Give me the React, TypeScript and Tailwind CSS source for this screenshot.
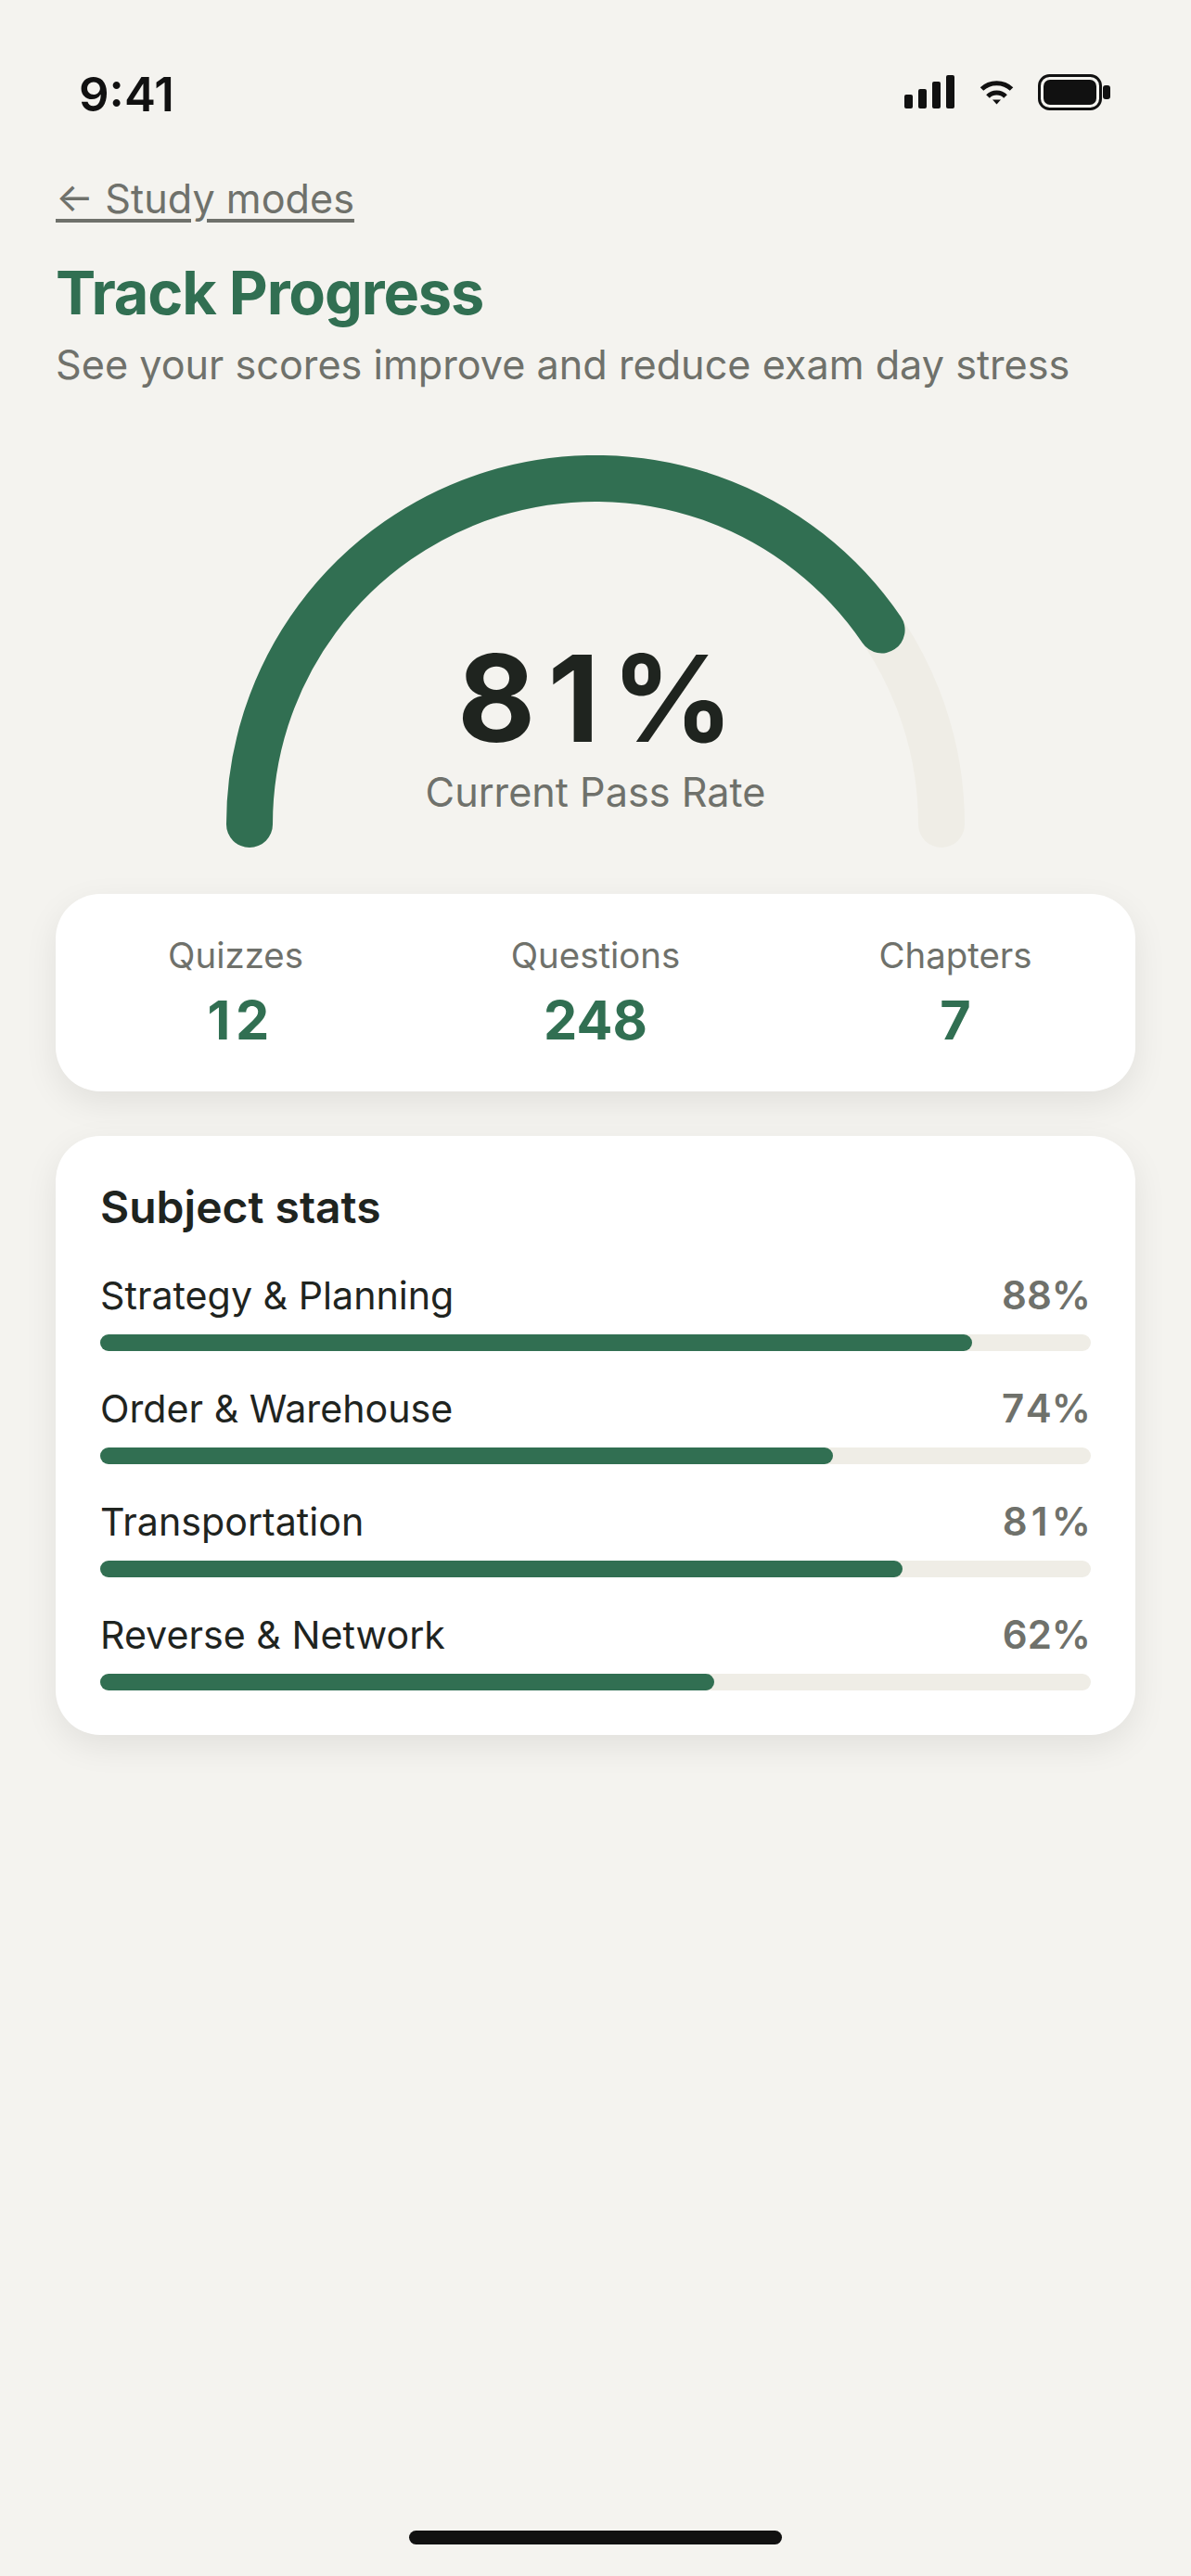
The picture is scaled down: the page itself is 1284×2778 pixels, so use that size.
const GREEN = "#316f52";

function StatusIcons() {
  return (
    <svg width="230" height="42" viewBox="0 0 230 42" fill="none" className="block -mt-[2px]">
      <rect x="8" y="22" width="9" height="15" rx="2" fill="#111" />
      <rect x="23" y="16" width="9" height="21" rx="2" fill="#111" />
      <rect x="38" y="8" width="9" height="29" rx="2" fill="#111" />
      <rect x="53" y="1" width="9" height="36" rx="2" fill="#111" />
      <path d="M91.5 16 C100 7.5 115 7.5 123.5 16" stroke="#111" strokeWidth="5" />
      <path d="M98 24 C103 18.5 112 18.5 117 24" stroke="#111" strokeWidth="5" />
      <path d="M103 27.5 L112 27.5 L107.5 32.5 Z" fill="#111" />
      <rect x="153.5" y="1.5" width="66" height="36" rx="11" stroke="#111" strokeWidth="3" />
      <rect x="158" y="6" width="57" height="27" rx="7" fill="#111" />
      <rect x="222" y="12" width="8" height="15" rx="3" fill="#111" />
    </svg>
  );
}

function Gauge() {
  return (
    <svg width="800" height="428" viewBox="0 0 800 428" fill="none" className="block">
      <path d="M27 398 A373 373 0 0 1 773 398" stroke="#efede6" strokeWidth="50" strokeLinecap="round" />
      <path d="M27 398 A373 373 0 0 1 708.6 188.4" stroke={GREEN} strokeWidth="50" strokeLinecap="round" />
    </svg>
  );
}

// Figures in the picture are evenly spaced, but keep the plain flagged "1".
function Num({ text }: { text: string }) {
  return (
    <>
      {text.split("").map((c, i) =>
        c === "1" ? (
          <span key={i} className="mx-[0.1em]">{c}</span>
        ) : c === "7" ? (
          <span key={i} className="mx-[0.04em]">{c}</span>
        ) : (
          <span key={i}>{c}</span>
        ),
      )}
    </>
  );
}

const stats = [
  { label: "Quizzes", value: "12" },
  { label: "Questions", value: "248" },
  { label: "Chapters", value: "7" },
];

const subjects = [
  { name: "Strategy & Planning", pct: 88 },
  { name: "Order & Warehouse", pct: 74 },
  { name: "Transportation", pct: 81 },
  { name: "Reverse & Network", pct: 62 },
];

export default function App() {
  return (
    <div className="relative flex min-h-[2778px] flex-col bg-[#f4f3ef] px-[60px] font-['Inter',sans-serif]">
      <div className="mt-[81px] flex h-[42px] items-center justify-between pl-[25px] pr-[27px]">
        <span className="text-[51px] leading-[42px] font-semibold text-[#111111] [font-variation-settings:'opsz'_17]">9:41</span>
        <StatusIcons />
      </div>
      <a className="mt-[61px] self-start text-[43.2px] leading-[60px] text-[#6f716b] underline decoration-[4px] underline-offset-[6px] [font-variation-settings:'opsz'_14]">← Study modes</a>
      <h1 className="mt-[36px] text-[64.8px] leading-[72px] font-bold tracking-[-1.15px] text-[#316f52] [font-variation-settings:'opsz'_21.6]">Track Progress</h1>
      <p className="mt-[11px] text-[43.2px] leading-[60px] text-[#6f716b] [font-variation-settings:'opsz'_14]">See your scores improve and reduce exam day stress</p>

      <div className="relative mt-[68px] flex justify-center">
        <Gauge />
        <div className="absolute left-0 right-0 top-[190px] flex flex-col items-center">
          <span className="text-[129.6px] leading-[144px] font-bold text-[#1f241f] [font-variation-settings:'opsz'_14]"><Num text="81%" /></span>
          <span className="mt-[1px] text-[43.2px] leading-[56px] text-[#6f716b] [font-variation-settings:'opsz'_14]">Current Pass Rate</span>
        </div>
      </div>

      <div className="mt-[45px] grid h-[213px] grid-cols-3 items-center rounded-[48px] bg-white shadow-[0_12px_36px_rgba(0,0,0,0.08)]">
        {stats.map((s) => (
          <div key={s.label} className="flex flex-col items-center">
            <span className="-mt-[2px] text-[38.4px] leading-[52px] text-[#6f716b] [font-variation-settings:'opsz'_14]">{s.label}</span>
            <span className="mt-[8px] text-[57.6px] leading-[72px] font-bold text-[#316f52] [font-variation-settings:'opsz'_14]"><Num text={s.value} /></span>
          </div>
        ))}
      </div>

      <div className="mt-[48px] rounded-[48px] bg-white px-[48px] pt-[45px] pb-[48px] shadow-[0_12px_36px_rgba(0,0,0,0.08)]">
        <h2 className="text-[48px] leading-[64px] font-semibold text-[#1f241f] [font-variation-settings:'opsz'_16]">Subject stats</h2>
        <div className="mt-[33px] flex flex-col gap-[32px]">
          {subjects.map((s) => (
            <div key={s.name} className="flex flex-col">
              <div className="flex h-[60px] items-center justify-between">
                <span className="text-[41.2px] leading-[56px] text-[#1f241f] [font-variation-settings:'opsz'_14]">{s.name}</span>
                <span className="text-[42px] leading-[56px] font-semibold text-[#6f716b] [font-variation-settings:'opsz'_14]"><Num text={`${s.pct}%`} /></span>
              </div>
              <div className="mt-[12px] h-[18px] rounded-full bg-[#efede6]">
                <div className="h-full rounded-full bg-[#316f52]" style={{ width: `${s.pct}%` }} />
              </div>
            </div>
          ))}
        </div>
      </div>

      <div className="absolute bottom-[34px] left-1/2 h-[15px] w-[402px] -translate-x-1/2 rounded-full bg-[#111111]" />
    </div>
  );
}
